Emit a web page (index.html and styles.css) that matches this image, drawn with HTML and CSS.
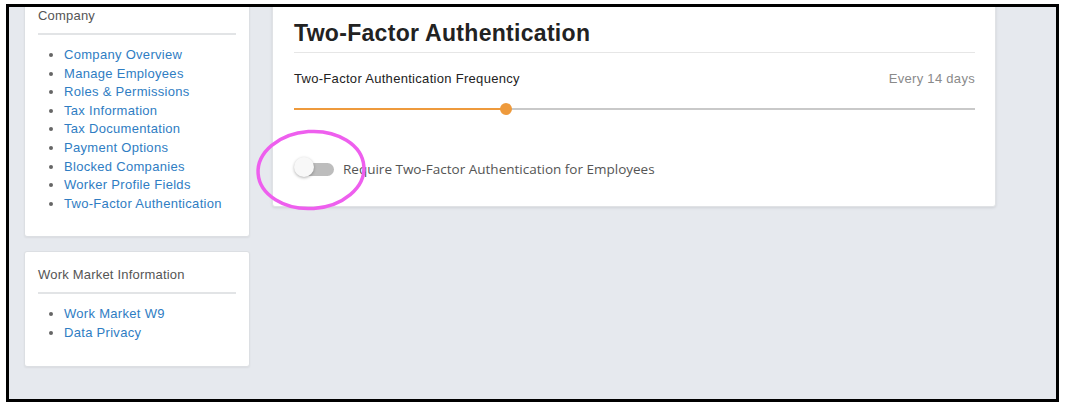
FILE: index.html
```html
<!DOCTYPE html>
<html>
<head>
<meta charset="utf-8">
<link rel="stylesheet" href="styles.css">
</head>
<body>
<div class="frame">
  <div class="page">
    <aside class="sidebar">
      <section class="panel">
        <h3 class="panel-title">Company</h3>
        <ul class="panel-links">
          <li><a href="#">Company Overview</a></li>
          <li><a href="#">Manage Employees</a></li>
          <li><a href="#">Roles &amp; Permissions</a></li>
          <li><a href="#">Tax Information</a></li>
          <li><a href="#">Tax Documentation</a></li>
          <li><a href="#">Payment Options</a></li>
          <li><a href="#">Blocked Companies</a></li>
          <li><a href="#">Worker Profile Fields</a></li>
          <li><a href="#">Two-Factor Authentication</a></li>
        </ul>
      </section>
      <section class="panel">
        <h3 class="panel-title">Work Market Information</h3>
        <ul class="panel-links">
          <li><a href="#">Work Market W9</a></li>
          <li><a href="#">Data Privacy</a></li>
        </ul>
      </section>
    </aside>
    <main class="card">
      <h1 class="card-title">Two-Factor Authentication</h1>
      <div class="freq-row">
        <span class="freq-label">Two-Factor Authentication Frequency</span>
        <span class="freq-value">Every 14 days</span>
      </div>
      <div class="slider">
        <div class="slider-fill" style="width: 212px"></div>
        <div class="slider-thumb"></div>
        <div class="slider-rest"></div>
      </div>
      <div class="toggle-row">
        <span class="toggle"><span class="toggle-track"></span><span class="toggle-knob"></span></span>
        <span class="toggle-label">Require Two-Factor Authentication for Employees</span>
        <svg class="annotation" width="116" height="88" viewBox="0 0 116 88">
          <ellipse cx="58" cy="44" rx="53" ry="38.5" fill="none" stroke="#ee5fee" stroke-width="3.5" transform="rotate(-4 58 44)"/>
        </svg>
      </div>
    </main>
  </div>
</div>
</body>
</html>
```
FILE: styles.css
```css
* { box-sizing: border-box; }
html, body { margin: 0; padding: 0; background: #fff; }
body { width: 1068px; height: 414px; padding: 4px 0 0 6px; }

.frame {
  width: 1053px;
  height: 398px;
  border: 3px solid #000;
  background: #e6e9ee;
  overflow: hidden;
}

.page {
  display: flex;
  align-items: flex-start;
  gap: 22px;
  margin-top: -15px;
  padding-left: 15px;
  font-family: "Liberation Sans", Arial, sans-serif;
}

.sidebar {
  width: 226px;
  display: flex;
  flex-direction: column;
  gap: 14px;
}

.panel {
  background: #fff;
  border: 1px solid #dcdfe3;
  border-radius: 3px;
  box-shadow: 0 1px 2px rgba(0,0,0,0.06);
  padding: 13px 13px 23px 13px;
}

.panel-title {
  margin: 0;
  font-size: 13px;
  font-weight: normal;
  line-height: 19px;
  color: #555;
  padding-bottom: 8px;
  border-bottom: 2px solid #e2e4e6;
  letter-spacing: 0.2px;
}

.panel-links {
  margin: 11px 0 0 0;
  padding-left: 26px;
  font-size: 13px;
  line-height: 18.6px;
  color: #666;
  letter-spacing: 0.3px;
}

.panel-links li::marker { font-size: 13px; }

.panel-links a {
  color: #2f7dc3;
  text-decoration: none;
}

.card {
  width: 724px;
  background: #fff;
  border: 1px solid #e0e2e5;
  border-radius: 3px;
  box-shadow: 0 1px 3px rgba(0,0,0,0.1);
  padding: 27px 20px 27px 21px;
}

.card-title {
  margin: 0;
  font-size: 23px;
  font-weight: bold;
  line-height: 27px;
  color: #222;
  padding-bottom: 5px;
  border-bottom: 1px solid #e6e6e6;
  letter-spacing: 0.3px;
}

.freq-row {
  display: flex;
  justify-content: space-between;
  margin-top: 17px;
  font-size: 13px;
  line-height: 18px;
  letter-spacing: 0.3px;
}

.freq-label { color: #222; }
.freq-value { color: #8a8a8a; }

.slider {
  display: flex;
  align-items: center;
  height: 12px;
  margin-top: 15px;
}

.slider-fill {
  height: 2px;
  background: #ee9a3c;
  margin-right: -6px;
}

.slider-thumb {
  width: 12px;
  height: 12px;
  border-radius: 50%;
  background: #ee9a3c;
  position: relative;
  z-index: 1;
  flex: none;
}

.slider-rest {
  flex: 1;
  height: 2px;
  background: #c9c9c9;
  margin-left: -6px;
}

.toggle-row {
  position: relative;
  display: flex;
  align-items: center;
  gap: 9px;
  margin-top: 44px;
  height: 20px;
}

.toggle {
  position: relative;
  width: 40px;
  height: 20px;
  flex: none;
}

.toggle-track {
  position: absolute;
  left: 7px;
  top: 4px;
  width: 33px;
  height: 13px;
  border-radius: 7px;
  background: #bdbdbd;
}

.toggle-knob {
  position: absolute;
  left: 0;
  top: -2px;
  width: 20px;
  height: 20px;
  border-radius: 50%;
  background: #f8f8f8;
  box-shadow: 0 1px 3px rgba(0,0,0,0.3);
}

.toggle-label {
  font-family: "Open Sans", sans-serif;
  font-size: 13.5px;
  color: #555;
}

.annotation {
  position: absolute;
  left: -41px;
  top: -33px;
  pointer-events: none;
}
```
